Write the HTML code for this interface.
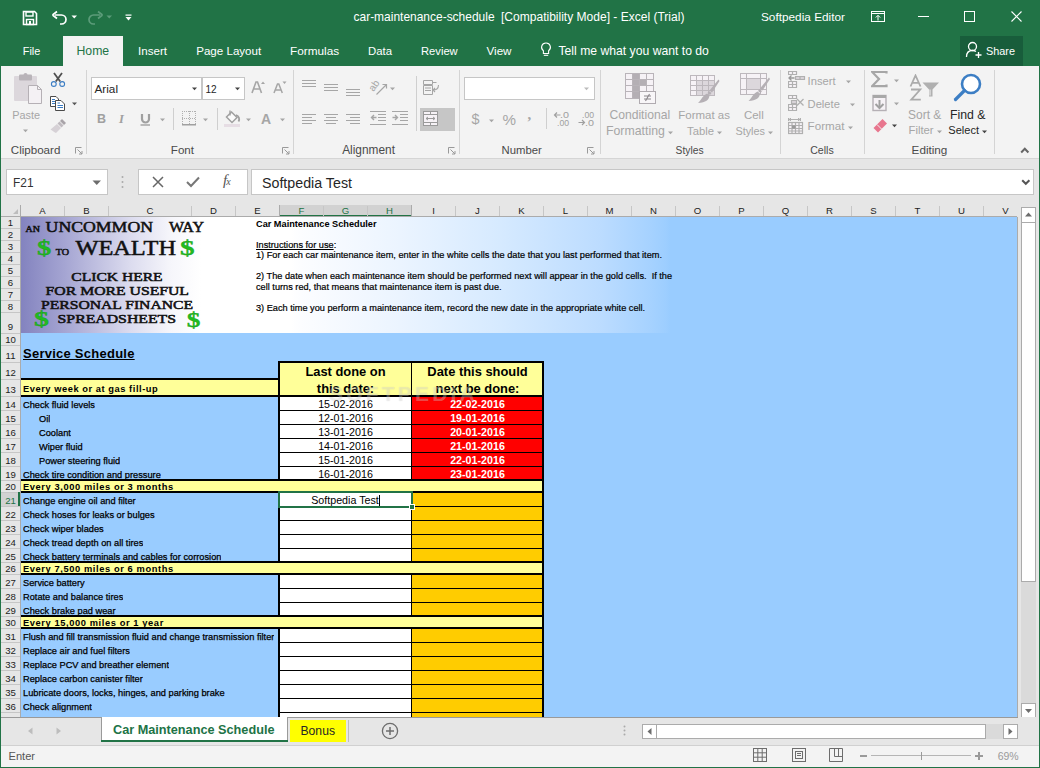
<!DOCTYPE html><html><head><meta charset="utf-8"><style>*{margin:0;padding:0;box-sizing:border-box}
html,body{width:1040px;height:768px;overflow:hidden;background:#217346;font-family:"Liberation Sans",sans-serif}
.a{position:absolute}
.t{position:absolute;white-space:nowrap}
.hdrt{font-size:9.6px;line-height:12px;color:#000}
#vscroll{left:1018px;top:205px;width:21px;height:512px;background:#e6e6e6}
</style></head><body>
<div class="a" style="left:0px;top:0px;width:1040px;height:66px;background:#217346"></div>
<div class="t" style="left:353.5px;top:10px;font-size:11.97px;line-height:15px;color:#fff;">car-maintenance-schedule</div>
<div class="t" style="left:501px;top:10px;font-size:12.04px;line-height:15px;color:#fff;">[Compatibility Mode] - Excel (Trial)</div>
<div class="t" style="left:761px;top:10px;font-size:11.81px;line-height:15px;color:#fff;">Softpedia Editor</div>
<svg class="a" style="left:22px;top:10px;" width="16" height="16" viewBox="0 0 16 16"><path d="M1.5 1.5 H12.5 L14.5 3.5 V14.5 H1.5 Z" fill="none" stroke="#fff" stroke-width="1.6"/><rect x="4" y="2" width="7" height="4" fill="none" stroke="#fff" stroke-width="1.4"/><rect x="4.5" y="9.5" width="7" height="5" fill="none" stroke="#fff" stroke-width="1.4"/><rect x="7" y="11" width="2" height="3" fill="#fff"/></svg>
<svg class="a" style="left:51px;top:10px;" width="18" height="16" viewBox="0 0 18 16"><path d="M4 5 H10.5 A4.5 4.5 0 0 1 10.5 14 H9" fill="none" stroke="#fff" stroke-width="1.7"/><path d="M1.5 5 L6 1.5 M1.5 5 L6 8.5" fill="none" stroke="#fff" stroke-width="1.7"/></svg>
<svg class="a" style="left:71px;top:15px;" width="7" height="5" viewBox="0 0 7 5"><path d="M0.5 0.5 H6 L3.25 3.5 Z" fill="#fff"/></svg>
<svg class="a" style="left:86px;top:10px;" width="18" height="16" viewBox="0 0 18 16"><path d="M14 5 H7.5 A4.5 4.5 0 0 0 7.5 14 H9" fill="none" stroke="#5c9c7a" stroke-width="1.7"/><path d="M16.5 5 L12 1.5 M16.5 5 L12 8.5" fill="none" stroke="#5c9c7a" stroke-width="1.7"/></svg>
<svg class="a" style="left:106px;top:15px;" width="7" height="5" viewBox="0 0 7 5"><path d="M0.5 0.5 H6 L3.25 3.5 Z" fill="#5c9c7a"/></svg>
<svg class="a" style="left:125px;top:14px;" width="8" height="8" viewBox="0 0 8 8"><rect x="0.5" y="0.5" width="6" height="1.2" fill="#fff"/><path d="M0.5 3 H6.5 L3.5 6.5 Z" fill="#fff"/></svg>
<svg class="a" style="left:871px;top:11px;" width="14" height="11" viewBox="0 0 14 11"><rect x="0.5" y="0.5" width="13" height="10" fill="none" stroke="#fff" stroke-width="1"/><path d="M1 2.5 H13" stroke="#fff" stroke-width="1"/><path d="M7 9.5 V4.5 M4.8 6.5 L7 4.3 L9.2 6.5" fill="none" stroke="#fff" stroke-width="1"/></svg>
<div class="a" style="left:918px;top:16px;width:11px;height:1px;background:#fff"></div>
<svg class="a" style="left:964px;top:11px;" width="11" height="11" viewBox="0 0 11 11"><rect x="0.5" y="0.5" width="10" height="10" fill="none" stroke="#fff" stroke-width="1"/></svg>
<svg class="a" style="left:1011px;top:11px;" width="11" height="11" viewBox="0 0 11 11"><path d="M0.5 0.5 L10.5 10.5 M10.5 0.5 L0.5 10.5" stroke="#fff" stroke-width="1.1"/></svg>
<div class="a" style="left:63px;top:36px;width:60px;height:30px;background:#f3f3f3"></div>
<div class="t" style="left:22.8px;top:44px;font-size:10.86px;line-height:14px;color:#fff;">File</div>
<div class="t" style="left:76.5px;top:44px;font-size:12.26px;line-height:15px;color:#217346;">Home</div>
<div class="t" style="left:138px;top:44px;font-size:11.6px;line-height:14px;color:#fff;">Insert</div>
<div class="t" style="left:196.2px;top:44px;font-size:11.58px;line-height:14px;color:#fff;">Page Layout</div>
<div class="t" style="left:290px;top:44px;font-size:11.81px;line-height:15px;color:#fff;">Formulas</div>
<div class="t" style="left:368px;top:44px;font-size:11.36px;line-height:14px;color:#fff;">Data</div>
<div class="t" style="left:421px;top:44px;font-size:11.19px;line-height:14px;color:#fff;">Review</div>
<div class="t" style="left:486.5px;top:43px;font-size:11.63px;line-height:15px;color:#fff;">View</div>
<svg class="a" style="left:540px;top:42px;" width="12" height="16" viewBox="0 0 12 16"><path d="M6 1 A4.3 4.3 0 0 1 8.6 8.8 V11.5 H3.4 V8.8 A4.3 4.3 0 0 1 6 1 Z" fill="none" stroke="#fff" stroke-width="1.1"/><path d="M3.8 13.3 H8.2" stroke="#fff" stroke-width="1.1"/></svg>
<div class="t" style="left:558.5px;top:44px;font-size:12.2px;line-height:15px;color:#fff;">Tell me what you want to do</div>
<div class="a" style="left:960px;top:36px;width:63px;height:30px;background:#185d3b"></div>
<svg class="a" style="left:965px;top:41px;" width="18" height="18" viewBox="0 0 18 18"><circle cx="7.5" cy="5.5" r="4" fill="none" stroke="#fff" stroke-width="1.3"/><path d="M1.5 16 C1.5 11.5 4 9.5 7.5 9.5 C9 9.5 10 9.8 11 10.5" fill="none" stroke="#fff" stroke-width="1.3"/><path d="M13.5 11 V17 M10.5 14 H16.5" stroke="#fff" stroke-width="1.3"/></svg>
<div class="t" style="left:986px;top:44px;font-size:10.87px;line-height:14px;color:#fff;">Share</div>
<div class="a" style="left:1px;top:66px;width:1038px;height:92px;background:#f3f3f3"></div>
<div class="a" style="left:1px;top:158px;width:1038px;height:1px;background:#d5d5d5"></div>
<svg class="a" style="left:13px;top:73px;" width="31" height="32" viewBox="0 0 31 32"><rect x="1" y="3" width="23" height="25" rx="1" fill="#dcd7dc"/><rect x="6" y="1.5" width="13" height="6" rx="1" fill="#b9b4b9"/><circle cx="12.5" cy="2" r="2" fill="#b9b4b9"/><path d="M15.5 12.5 H24.5 L28.5 16.5 V30.5 H15.5 Z" fill="#f4f1f4" stroke="#b5b0b5" stroke-width="1"/><path d="M24.5 12.5 V16.5 H28.5" fill="none" stroke="#b5b0b5" stroke-width="1"/></svg>
<div class="t" style="left:12.2px;top:108px;font-size:10.87px;line-height:14px;color:#a6a6a6;">Paste</div>
<svg class="a" style="left:23px;top:129px;" width="6" height="4" viewBox="0 0 6 4"><path d="M0 0.5 H5 L2.5 3.2 Z" fill="#a6a6a6"/></svg>
<svg class="a" style="left:50px;top:72px;" width="16" height="16" viewBox="0 0 16 16"><path d="M4 1 L10.2 9.5 M12 1 L5.8 9.5" stroke="#505050" stroke-width="1.8"/><circle cx="3.8" cy="12" r="2.4" fill="none" stroke="#3b7dc4" stroke-width="1.1"/><circle cx="12.2" cy="12" r="2.4" fill="none" stroke="#3b7dc4" stroke-width="1.1"/></svg>
<svg class="a" style="left:49px;top:95px;" width="17" height="16" viewBox="0 0 17 16"><path d="M1.5 1.5 H7 L9.5 4 V11.5 H1.5 Z" fill="#fff" stroke="#4a4a4a" stroke-width="1"/><path d="M6.5 5.5 H12 L15.5 9 V15.5 H6.5 Z" fill="#fff" stroke="#4a4a4a" stroke-width="1"/><path d="M3 4.5 H6 M3 6.5 H6 M3 8.5 H6 M8.5 8 H11 M8.5 10.5 H14 M8.5 12.5 H14" stroke="#3b7dc4" stroke-width="1"/></svg>
<svg class="a" style="left:72px;top:102px;" width="6" height="4" viewBox="0 0 6 4"><path d="M0 0.5 H5 L2.5 3.2 Z" fill="#555"/></svg>
<svg class="a" style="left:49px;top:117px;" width="19" height="17" viewBox="0 0 19 17"><path d="M13 2 L17 6 L15 8 L11 4 Z" fill="#a8a3a8"/><path d="M10.5 4.5 L14.5 8.5 L12.5 10.5 L8.5 6.5 Z" fill="#bfbabf"/><path d="M8 7 L12 11 L7 16 C5 15 3 13.5 1.5 12.5 Z" fill="#d6d1d6"/></svg>
<div class="t" style="left:10.8px;top:143px;font-size:11.59px;line-height:14px;color:#4a4a4a;">Clipboard</div>
<svg class="a" style="left:75px;top:147px;" width="8" height="8" viewBox="0 0 8 8"><path d="M0.5 0.5 H6.5 M0.5 0.5 V6.5" stroke="#999" stroke-width="1"/><path d="M2.5 2.5 L7 7 M7 4 V7 H4" fill="none" stroke="#999" stroke-width="1"/></svg>
<div class="a" style="left:86px;top:70px;width:1px;height:84px;background:#d4d4d4"></div>
<div class="a" style="left:91px;top:77px;width:111px;height:23px;background:#fff;border:1px solid #c6c6c6"></div>
<div class="t" style="left:94.5px;top:81px;font-size:11.75px;line-height:15px;color:#262626;">Arial</div>
<svg class="a" style="left:192px;top:87px;" width="6" height="4" viewBox="0 0 6 4"><path d="M0 0.5 H5 L2.5 3.2 Z" fill="#444"/></svg>
<div class="a" style="left:202px;top:77px;width:43px;height:23px;background:#fff;border:1px solid #c6c6c6"></div>
<div class="t" style="left:205.5px;top:83px;font-size:10.07px;line-height:13px;color:#262626;">12</div>
<svg class="a" style="left:235px;top:87px;" width="6" height="4" viewBox="0 0 6 4"><path d="M0 0.5 H5 L2.5 3.2 Z" fill="#444"/></svg>
<svg class="a" style="left:251px;top:80px;" width="14" height="14" viewBox="0 0 14 14"><path d="M1 13 L5 2 H6.5 L10.5 13 M2.7 9 H8.8" fill="none" stroke="#a6a6a6" stroke-width="1.6"/><path d="M10 4 L12 1.5 L14 4 Z" fill="#a6a6a6"/></svg>
<svg class="a" style="left:273px;top:80px;" width="14" height="14" viewBox="0 0 14 14"><path d="M1 13 L4.5 4 H5.8 L9.3 13 M2.5 10 H7.8" fill="none" stroke="#a6a6a6" stroke-width="1.5"/><path d="M9.5 1.5 H13.5 L11.5 4 Z" fill="#a6a6a6"/></svg>
<div class="t" style="left:97px;top:111px;font-size:12.5px;line-height:16px;color:#a0a0a0;font-weight:bold;">B</div>
<div class="t" style="left:119px;top:111px;font-size:12.5px;line-height:16px;color:#a0a0a0;font-weight:bold;font-family:Liberation Serif"><i>I</i></div>
<svg class="a" style="left:140px;top:113px;" width="11" height="13" viewBox="0 0 11 13"><path d="M2 1 V6 A3.5 3.5 0 0 0 9 6 V1" fill="none" stroke="#a0a0a0" stroke-width="2.2"/><path d="M0.5 12 H10" stroke="#a0a0a0" stroke-width="1.4"/></svg>
<svg class="a" style="left:160px;top:118px;" width="6" height="4" viewBox="0 0 6 4"><path d="M0 0.5 H5 L2.5 3.2 Z" fill="#a6a6a6"/></svg>
<div class="a" style="left:173px;top:108px;width:1px;height:22px;background:#cfcfcf"></div>
<svg class="a" style="left:182px;top:111px;" width="14" height="15" viewBox="0 0 14 15"><rect x="0" y="0" width="1" height="1" fill="#b0b0b0"/><rect x="0" y="7" width="1" height="1" fill="#b0b0b0"/><rect x="0" y="0" width="1" height="1" fill="#b0b0b0"/><rect x="7" y="0" width="1" height="1" fill="#b0b0b0"/><rect x="13" y="0" width="1" height="1" fill="#b0b0b0"/><rect x="2" y="0" width="1" height="1" fill="#b0b0b0"/><rect x="2" y="7" width="1" height="1" fill="#b0b0b0"/><rect x="0" y="2" width="1" height="1" fill="#b0b0b0"/><rect x="7" y="2" width="1" height="1" fill="#b0b0b0"/><rect x="13" y="2" width="1" height="1" fill="#b0b0b0"/><rect x="4" y="0" width="1" height="1" fill="#b0b0b0"/><rect x="4" y="7" width="1" height="1" fill="#b0b0b0"/><rect x="0" y="4" width="1" height="1" fill="#b0b0b0"/><rect x="7" y="4" width="1" height="1" fill="#b0b0b0"/><rect x="13" y="4" width="1" height="1" fill="#b0b0b0"/><rect x="6" y="0" width="1" height="1" fill="#b0b0b0"/><rect x="6" y="7" width="1" height="1" fill="#b0b0b0"/><rect x="0" y="6" width="1" height="1" fill="#b0b0b0"/><rect x="7" y="6" width="1" height="1" fill="#b0b0b0"/><rect x="13" y="6" width="1" height="1" fill="#b0b0b0"/><rect x="8" y="0" width="1" height="1" fill="#b0b0b0"/><rect x="8" y="7" width="1" height="1" fill="#b0b0b0"/><rect x="0" y="8" width="1" height="1" fill="#b0b0b0"/><rect x="7" y="8" width="1" height="1" fill="#b0b0b0"/><rect x="13" y="8" width="1" height="1" fill="#b0b0b0"/><rect x="10" y="0" width="1" height="1" fill="#b0b0b0"/><rect x="10" y="7" width="1" height="1" fill="#b0b0b0"/><rect x="0" y="10" width="1" height="1" fill="#b0b0b0"/><rect x="7" y="10" width="1" height="1" fill="#b0b0b0"/><rect x="13" y="10" width="1" height="1" fill="#b0b0b0"/><rect x="12" y="0" width="1" height="1" fill="#b0b0b0"/><rect x="12" y="7" width="1" height="1" fill="#b0b0b0"/><rect x="0" y="12" width="1" height="1" fill="#b0b0b0"/><rect x="7" y="12" width="1" height="1" fill="#b0b0b0"/><rect x="13" y="12" width="1" height="1" fill="#b0b0b0"/><rect x="0" y="13" width="14" height="1.5" fill="#a0a0a0"/></svg>
<svg class="a" style="left:203px;top:118px;" width="6" height="4" viewBox="0 0 6 4"><path d="M0 0.5 H5 L2.5 3.2 Z" fill="#a6a6a6"/></svg>
<div class="a" style="left:217px;top:108px;width:1px;height:22px;background:#cfcfcf"></div>
<svg class="a" style="left:224px;top:110px;" width="18" height="17" viewBox="0 0 18 17"><path d="M7.5 2 L13 7.5 L8 12.5 L2.5 7 Z" fill="#fbfbfb" stroke="#a0a0a0" stroke-width="1.5"/><path d="M6 0.5 V5.5" stroke="#a0a0a0" stroke-width="1.4"/><path d="M12 5 C15 6 16 9 14.5 11.5" fill="none" stroke="#a0a0a0" stroke-width="1.8"/><rect x="0" y="14" width="16" height="3" fill="#e6dde4"/></svg>
<svg class="a" style="left:246px;top:118px;" width="6" height="4" viewBox="0 0 6 4"><path d="M0 0.5 H5 L2.5 3.2 Z" fill="#a6a6a6"/></svg>
<div class="t" style="left:261px;top:111px;font-size:13.99px;line-height:17px;color:#a6a6a6;font-weight:bold;">A</div>
<svg class="a" style="left:280px;top:118px;" width="6" height="4" viewBox="0 0 6 4"><path d="M0 0.5 H5 L2.5 3.2 Z" fill="#a6a6a6"/></svg>
<div class="t" style="left:170.8px;top:143px;font-size:11.6px;line-height:14px;color:#4a4a4a;">Font</div>
<svg class="a" style="left:282px;top:147px;" width="8" height="8" viewBox="0 0 8 8"><path d="M0.5 0.5 H6.5 M0.5 0.5 V6.5" stroke="#999" stroke-width="1"/><path d="M2.5 2.5 L7 7 M7 4 V7 H4" fill="none" stroke="#999" stroke-width="1"/></svg>
<div class="a" style="left:293px;top:70px;width:1px;height:84px;background:#d4d4d4"></div>
<svg class="a" style="left:302px;top:80px;" width="14" height="20" viewBox="0 0 14 20"><rect x="0" y="0" width="14" height="1" fill="#a6a6a6"/><rect x="0" y="3" width="14" height="1" fill="#a6a6a6"/><rect x="0" y="6" width="14" height="1" fill="#a6a6a6"/></svg>
<svg class="a" style="left:324px;top:84px;" width="14" height="20" viewBox="0 0 14 20"><rect x="0" y="0" width="14" height="1" fill="#a6a6a6"/><rect x="0" y="3" width="14" height="1" fill="#a6a6a6"/><rect x="0" y="6" width="14" height="1" fill="#a6a6a6"/></svg>
<svg class="a" style="left:346px;top:88px;" width="14" height="20" viewBox="0 0 14 20"><rect x="0" y="1" width="14" height="1" fill="#a6a6a6"/><rect x="0" y="4" width="14" height="1" fill="#a6a6a6"/><rect x="0" y="7" width="14" height="1" fill="#a6a6a6"/></svg>
<svg class="a" style="left:369px;top:79px;" width="20" height="17" viewBox="0 0 20 17"><text x="0" y="0" font-size="10" fill="#a6a6a6" transform="translate(4.5 13) rotate(-55)" font-family="Liberation Sans">ab</text><path d="M7.5 15.5 L17 6 M13.5 5.5 H17.5 V9.5" fill="none" stroke="#a6a6a6" stroke-width="1.2"/></svg>
<svg class="a" style="left:390px;top:87px;" width="6" height="4" viewBox="0 0 6 4"><path d="M0 0.5 H5 L2.5 3.2 Z" fill="#a6a6a6"/></svg>
<div class="a" style="left:416px;top:76px;width:1px;height:55px;background:#cfcfcf"></div>
<svg class="a" style="left:423px;top:80px;" width="17" height="16" viewBox="0 0 17 16"><path d="M0.5 0.5 H9.5 V4.5 H0.5 Z M9.5 2.5 H13.5" fill="none" stroke="#a6a6a6"/><path d="M0.5 5.5 H9.5 V14.5 H0.5 Z M2 8 H8 M2 10.5 H8" fill="none" stroke="#a6a6a6"/><path d="M15.5 5 C15.5 9 13 10 10 10 M12 8 L10 10 L12 12" fill="none" stroke="#a6a6a6" stroke-width="1.1"/></svg>
<svg class="a" style="left:302px;top:114px;" width="14" height="20" viewBox="0 0 14 20"><rect x="0" y="0" width="14" height="1" fill="#a6a6a6"/><rect x="0" y="3" width="10" height="1" fill="#a6a6a6"/><rect x="0" y="6" width="14" height="1" fill="#a6a6a6"/><rect x="0" y="9" width="10" height="1" fill="#a6a6a6"/></svg>
<svg class="a" style="left:324px;top:114px;" width="14" height="20" viewBox="0 0 14 20"><rect x="0" y="0" width="14" height="1" fill="#a6a6a6"/><rect x="2" y="3" width="10" height="1" fill="#a6a6a6"/><rect x="0" y="6" width="14" height="1" fill="#a6a6a6"/><rect x="2" y="9" width="10" height="1" fill="#a6a6a6"/></svg>
<svg class="a" style="left:346px;top:114px;" width="14" height="20" viewBox="0 0 14 20"><rect x="0" y="0" width="14" height="1" fill="#a6a6a6"/><rect x="4" y="3" width="10" height="1" fill="#a6a6a6"/><rect x="0" y="6" width="14" height="1" fill="#a6a6a6"/><rect x="4" y="9" width="10" height="1" fill="#a6a6a6"/></svg>
<svg class="a" style="left:370px;top:111px;" width="17" height="15" viewBox="0 0 17 15"><path d="M0 0.5 H16 M8 3.5 H16 M8 6.5 H16 M8 9.5 H16 M0 13.5 H16" stroke="#a6a6a6"/><path d="M6.5 6.5 H1.5 M4 4 L1.5 6.5 L4 9" fill="none" stroke="#a6a6a6" stroke-width="1.4"/></svg>
<svg class="a" style="left:392px;top:111px;" width="17" height="15" viewBox="0 0 17 15"><path d="M0 0.5 H16 M8 3.5 H16 M8 6.5 H16 M8 9.5 H16 M0 13.5 H16" stroke="#a6a6a6"/><path d="M0.5 6.5 H5.5 M3 4 L5.5 6.5 L3 9" fill="none" stroke="#a6a6a6" stroke-width="1.4"/></svg>
<div class="a" style="left:420px;top:108px;width:35px;height:23px;background:#c6c6c6"></div>
<svg class="a" style="left:423px;top:111px;" width="16" height="16" viewBox="0 0 16 16"><g fill="#f6f2f6" stroke="#9a9a9a"><rect x="0.5" y="0.5" width="14" height="14"/></g><path d="M0.5 3.5 H14.5 M0.5 11.5 H14.5 M7.5 0.5 V3.5 M7.5 11.5 V14.5 M3 7.5 H12 M3 7.5 L5 6 M3 7.5 L5 9 M12 7.5 L10 6 M12 7.5 L10 9" fill="none" stroke="#9a9a9a"/></svg>
<div class="t" style="left:342.2px;top:143px;font-size:11.87px;line-height:15px;color:#4a4a4a;">Alignment</div>
<svg class="a" style="left:448px;top:147px;" width="8" height="8" viewBox="0 0 8 8"><path d="M0.5 0.5 H6.5 M0.5 0.5 V6.5" stroke="#999" stroke-width="1"/><path d="M2.5 2.5 L7 7 M7 4 V7 H4" fill="none" stroke="#999" stroke-width="1"/></svg>
<div class="a" style="left:459px;top:70px;width:1px;height:84px;background:#d4d4d4"></div>
<div class="a" style="left:464px;top:77px;width:131px;height:23px;background:#fff;border:1px solid #c6c6c6"></div>
<svg class="a" style="left:584px;top:87px;" width="6" height="4" viewBox="0 0 6 4"><path d="M0 0.5 H5 L2.5 3.2 Z" fill="#bbb"/></svg>
<div class="t" style="left:471.5px;top:110px;font-size:14.39px;line-height:18px;color:#a6a6a6;">$</div>
<svg class="a" style="left:489px;top:119px;" width="6" height="4" viewBox="0 0 6 4"><path d="M0 0.5 H5 L2.5 3.2 Z" fill="#a6a6a6"/></svg>
<div class="t" style="left:502.5px;top:110px;font-size:15.18px;line-height:19px;color:#a6a6a6;">%</div>
<div class="t" style="left:527.5px;top:105px;font-size:15px;line-height:19px;color:#a6a6a6;font-weight:bold;font-family:Liberation Serif">,</div>
<div class="a" style="left:546px;top:108px;width:1px;height:21px;background:#cfcfcf"></div>
<svg class="a" style="left:553px;top:111px;" width="17" height="16" viewBox="0 0 17 16"><text x="7" y="7" font-size="9" fill="#a0a0a0" font-family="Liberation Sans" textLength="9" lengthAdjust="spacingAndGlyphs">.0</text><text x="4" y="15" font-size="9" fill="#a0a0a0" font-family="Liberation Sans" textLength="12" lengthAdjust="spacingAndGlyphs">.00</text><path d="M7.5 4 H1.5 M4 1.5 L1.5 4 L4 6.5" fill="none" stroke="#a0a0a0" stroke-width="1.2"/></svg>
<svg class="a" style="left:578px;top:111px;" width="17" height="16" viewBox="0 0 17 16"><text x="4" y="7" font-size="9" fill="#a0a0a0" font-family="Liberation Sans" textLength="12" lengthAdjust="spacingAndGlyphs">.00</text><text x="7" y="15" font-size="9" fill="#a0a0a0" font-family="Liberation Sans" textLength="9" lengthAdjust="spacingAndGlyphs">.0</text><path d="M0.5 11.5 H6.5 M4 9 L6.5 11.5 L4 14" fill="none" stroke="#a0a0a0" stroke-width="1.2"/></svg>
<div class="t" style="left:501.6px;top:143px;font-size:11.33px;line-height:14px;color:#4a4a4a;">Number</div>
<svg class="a" style="left:587px;top:147px;" width="8" height="8" viewBox="0 0 8 8"><path d="M0.5 0.5 H6.5 M0.5 0.5 V6.5" stroke="#999" stroke-width="1"/><path d="M2.5 2.5 L7 7 M7 4 V7 H4" fill="none" stroke="#999" stroke-width="1"/></svg>
<div class="a" style="left:600px;top:70px;width:1px;height:84px;background:#d4d4d4"></div>
<svg class="a" style="left:625px;top:73px;" width="32" height="32" viewBox="0 0 32 32"><rect x="0.5" y="0.5" width="7" height="6" fill="#f6f2f6" stroke="#b9b4b9"/><rect x="7.5" y="0.5" width="7" height="6" fill="#b4afb4" stroke="#b9b4b9"/><rect x="14.5" y="0.5" width="7" height="6" fill="#f6f2f6" stroke="#b9b4b9"/><rect x="21.5" y="0.5" width="7" height="6" fill="#f6f2f6" stroke="#b9b4b9"/><rect x="0.5" y="6.5" width="7" height="6" fill="#f6f2f6" stroke="#b9b4b9"/><rect x="7.5" y="6.5" width="7" height="6" fill="#b4afb4" stroke="#b9b4b9"/><rect x="14.5" y="6.5" width="7" height="6" fill="#b4afb4" stroke="#b9b4b9"/><rect x="21.5" y="6.5" width="7" height="6" fill="#f6f2f6" stroke="#b9b4b9"/><rect x="0.5" y="12.5" width="7" height="6" fill="#f6f2f6" stroke="#b9b4b9"/><rect x="7.5" y="12.5" width="7" height="6" fill="#b4afb4" stroke="#b9b4b9"/><rect x="14.5" y="12.5" width="7" height="6" fill="#f6f2f6" stroke="#b9b4b9"/><rect x="21.5" y="12.5" width="7" height="6" fill="#f6f2f6" stroke="#b9b4b9"/><rect x="0.5" y="18.5" width="7" height="7" fill="#f6f2f6" stroke="#b9b4b9"/><rect x="7.5" y="18.5" width="7" height="7" fill="#b4afb4" stroke="#b9b4b9"/><rect x="14.5" y="18.5" width="7" height="7" fill="#f6f2f6" stroke="#b9b4b9"/><rect x="21.5" y="18.5" width="7" height="7" fill="#f6f2f6" stroke="#b9b4b9"/><rect x="14.5" y="18.5" width="16" height="12" fill="#f8f6f8" stroke="#b0abb0"/><path d="M19 23 H26 M19 26 H26 M24.5 21 L20.5 28" stroke="#8a858a" stroke-width="1.1"/></svg>
<div class="t" style="left:609.4px;top:108px;font-size:12.15px;line-height:15px;color:#a6a6a6;">Conditional</div>
<div class="t" style="left:606px;top:124px;font-size:12.32px;line-height:15px;color:#a6a6a6;">Formatting</div>
<svg class="a" style="left:668px;top:131px;" width="6" height="4" viewBox="0 0 6 4"><path d="M0 0.5 H5 L2.5 3.2 Z" fill="#a6a6a6"/></svg>
<svg class="a" style="left:690px;top:75px;" width="32" height="30" viewBox="0 0 32 30"><rect x="0.5" y="0.5" width="6" height="5" fill="#f6f2f6" stroke="#bdb8bd"/><rect x="6.5" y="0.5" width="6" height="5" fill="#f6f2f6" stroke="#bdb8bd"/><rect x="12.5" y="0.5" width="6" height="5" fill="#f6f2f6" stroke="#bdb8bd"/><rect x="18.5" y="0.5" width="6" height="5" fill="#f6f2f6" stroke="#bdb8bd"/><rect x="0.5" y="5.5" width="6" height="5" fill="#f6f2f6" stroke="#bdb8bd"/><rect x="6.5" y="5.5" width="6" height="5" fill="#dcd7dc" stroke="#bdb8bd"/><rect x="12.5" y="5.5" width="6" height="5" fill="#dcd7dc" stroke="#bdb8bd"/><rect x="18.5" y="5.5" width="6" height="5" fill="#dcd7dc" stroke="#bdb8bd"/><rect x="0.5" y="10.5" width="6" height="5" fill="#f6f2f6" stroke="#bdb8bd"/><rect x="6.5" y="10.5" width="6" height="5" fill="#dcd7dc" stroke="#bdb8bd"/><rect x="12.5" y="10.5" width="6" height="5" fill="#dcd7dc" stroke="#bdb8bd"/><rect x="18.5" y="10.5" width="6" height="5" fill="#dcd7dc" stroke="#bdb8bd"/><rect x="0.5" y="15.5" width="6" height="5" fill="#f6f2f6" stroke="#bdb8bd"/><rect x="6.5" y="15.5" width="6" height="5" fill="#dcd7dc" stroke="#bdb8bd"/><rect x="12.5" y="15.5" width="6" height="5" fill="#dcd7dc" stroke="#bdb8bd"/><rect x="18.5" y="15.5" width="6" height="5" fill="#dcd7dc" stroke="#bdb8bd"/><path d="M29.5 6 L22 17.5 L19.5 15.5 L28.5 4.5 Z" fill="#b5b0b5"/><path d="M21.5 18 L19 16 L17.5 18 L20 20 Z" fill="#b5b0b5"/><path d="M17 18.5 L19.5 20.5 C19 25 16 27.5 8 28 C11 25.5 12.5 20.5 17 18.5 Z" fill="#b5b0b5"/></svg>
<div class="t" style="left:678.3px;top:108px;font-size:11.49px;line-height:14px;color:#a6a6a6;">Format as</div>
<div class="t" style="left:687px;top:124px;font-size:11.25px;line-height:14px;color:#a6a6a6;">Table</div>
<svg class="a" style="left:717px;top:131px;" width="6" height="4" viewBox="0 0 6 4"><path d="M0 0.5 H5 L2.5 3.2 Z" fill="#a6a6a6"/></svg>
<svg class="a" style="left:740px;top:73px;" width="32" height="30" viewBox="0 0 32 30"><rect x="0.5" y="0.5" width="26" height="21" fill="#f6f2f6" stroke="#bdb8bd"/><rect x="6.5" y="5.5" width="14" height="11" fill="#dcd7dc" stroke="#bdb8bd"/><path d="M0.5 5.5 H26.5 M0.5 16.5 H26.5 M6.5 0.5 V21.5 M20.5 0.5 V21.5" stroke="#bdb8bd"/><path d="M30 6 L22.5 17.5 L20 15.5 L29 4.5 Z" fill="#b5b0b5"/><path d="M22 18 L19.5 16 L18 18 L20.5 20 Z" fill="#b5b0b5"/><path d="M17.5 18.5 L20 20.5 C19.5 25 16.5 27.5 8.5 28 C11.5 25.5 13 20.5 17.5 18.5 Z" fill="#b5b0b5"/></svg>
<div class="t" style="left:744px;top:108px;font-size:11.44px;line-height:14px;color:#a6a6a6;">Cell</div>
<div class="t" style="left:735.4px;top:124px;font-size:10.87px;line-height:14px;color:#a6a6a6;">Styles</div>
<svg class="a" style="left:768px;top:131px;" width="6" height="4" viewBox="0 0 6 4"><path d="M0 0.5 H5 L2.5 3.2 Z" fill="#a6a6a6"/></svg>
<div class="t" style="left:675.6px;top:144px;font-size:10.28px;line-height:13px;color:#4a4a4a;">Styles</div>
<div class="a" style="left:780px;top:70px;width:1px;height:84px;background:#d4d4d4"></div>
<svg class="a" style="left:788px;top:71px;" width="18" height="18" viewBox="0 0 18 18"><g fill="#f6f2f6" stroke="#b0b0b0" stroke-width="1.2"><path d="M0.5 0.5 H8.5 V3.5 H0.5 Z M4.5 0.5 V3.5"/><path d="M7.5 5.5 H16.5 V8.5 H7.5 Z M12 5.5 V8.5" fill="#d8d3d8"/><path d="M0.5 10.5 H8.5 V16.5 H0.5 Z M0.5 13.5 H8.5 M4.5 10.5 V16.5"/></g><path d="M6.5 7 H1 M3.5 4.5 L1 7 L3.5 9.5" fill="none" stroke="#9a9a9a" stroke-width="1.3"/></svg>
<div class="t" style="left:807.6px;top:74px;font-size:11.2px;line-height:14px;color:#a6a6a6;">Insert</div>
<svg class="a" style="left:846px;top:80px;" width="6" height="4" viewBox="0 0 6 4"><path d="M0 0.5 H5 L2.5 3.2 Z" fill="#a6a6a6"/></svg>
<svg class="a" style="left:788px;top:95px;" width="18" height="18" viewBox="0 0 18 18"><g fill="#f6f2f6" stroke="#b0b0b0" stroke-width="1.2"><path d="M0.5 0.5 H8.5 V3.5 H0.5 Z M4.5 0.5 V3.5"/><path d="M3.5 5.5 H8.5 V8.5 H3.5 Z" fill="#d8d3d8"/><path d="M0.5 9.5 H8.5 V15.5 H0.5 Z M0.5 12.5 H8.5 M4.5 9.5 V15.5"/></g><path d="M9 4 L15.5 10.5 M15.5 4 L9 10.5" stroke="#b0b0b0" stroke-width="1.3"/></svg>
<div class="t" style="left:807.6px;top:97px;font-size:11.17px;line-height:14px;color:#a6a6a6;">Delete</div>
<svg class="a" style="left:850px;top:103px;" width="6" height="4" viewBox="0 0 6 4"><path d="M0 0.5 H5 L2.5 3.2 Z" fill="#a6a6a6"/></svg>
<svg class="a" style="left:788px;top:118px;" width="18" height="18" viewBox="0 0 18 18"><path d="M0.5 0 V3 M12.5 0 V3 M1 1.5 H12 M1 1.5 L3 0.2 M1 1.5 L3 2.8 M12 1.5 L10 0.2 M12 1.5 L10 2.8" fill="none" stroke="#b0b0b0" stroke-width="1"/><g fill="#f6f2f6" stroke="#b0b0b0" stroke-width="1.2"><rect x="0.5" y="4.5" width="14" height="11"/><path d="M0.5 7.5 H14.5 M0.5 10.5 H14.5 M0.5 13 H14.5 M4 4.5 V15.5 M7.5 4.5 V15.5 M11 4.5 V15.5"/></g><rect x="4" y="7.5" width="3.5" height="3" fill="#9a9a9a"/></svg>
<div class="t" style="left:807.6px;top:118px;font-size:11.62px;line-height:15px;color:#a6a6a6;">Format</div>
<svg class="a" style="left:848px;top:126px;" width="6" height="4" viewBox="0 0 6 4"><path d="M0 0.5 H5 L2.5 3.2 Z" fill="#a6a6a6"/></svg>
<div class="t" style="left:810.2px;top:144px;font-size:10.57px;line-height:13px;color:#4a4a4a;">Cells</div>
<div class="a" style="left:864px;top:70px;width:1px;height:84px;background:#d4d4d4"></div>
<svg class="a" style="left:871px;top:71px;" width="17" height="17" viewBox="0 0 17 17"><path d="M15.5 2.5 V0.8 H1 L8 8 L1 15.2 H15.5 V13.5" fill="none" stroke="#a6a6a6" stroke-width="2.2"/></svg>
<svg class="a" style="left:894px;top:79px;" width="6" height="4" viewBox="0 0 6 4"><path d="M0 0.5 H5 L2.5 3.2 Z" fill="#a6a6a6"/></svg>
<svg class="a" style="left:872px;top:94px;" width="16" height="18" viewBox="0 0 16 18"><rect x="1" y="1.5" width="13" height="15" fill="#f6f2f6" stroke="#b5b0b5" stroke-width="1.4"/><rect x="1" y="1" width="13" height="3" fill="#a8a8a8"/><path d="M7.5 6 V13" stroke="#a0a0a0" stroke-width="2"/><path d="M3.5 10 L7.5 14 L11.5 10" fill="none" stroke="#a0a0a0" stroke-width="2"/></svg>
<svg class="a" style="left:894px;top:102px;" width="6" height="4" viewBox="0 0 6 4"><path d="M0 0.5 H5 L2.5 3.2 Z" fill="#a6a6a6"/></svg>
<svg class="a" style="left:872px;top:118px;" width="16" height="15" viewBox="0 0 16 15"><path d="M10.5 1 L15 5.5 L6 14.5 L1.5 10 Z" fill="#e8768e"/><path d="M5 6.5 L9.5 11" stroke="#f3f3f3" stroke-width="1"/></svg>
<svg class="a" style="left:892px;top:124px;" width="6" height="4" viewBox="0 0 6 4"><path d="M0 0.5 H5 L2.5 3.2 Z" fill="#444"/></svg>
<svg class="a" style="left:909px;top:74px;" width="32" height="29" viewBox="0 0 32 29"><path d="M1.5 12.5 L6.5 1.5 L11.5 12.5 M3.3 8.8 H9.7" fill="none" stroke="#ababab" stroke-width="1.8"/><path d="M2 15.5 H11.3 L2.3 25.6 H11.8" fill="none" stroke="#ababab" stroke-width="1.8"/><path d="M13.5 8.5 H30 L23.5 15.5 V22.5 H20 V15.5 Z" fill="#b0b0b0"/><path d="M21 15.5 V21.5" stroke="#f3f3f3" stroke-width="1"/></svg>
<div class="t" style="left:908px;top:108px;font-size:11.98px;line-height:15px;color:#a6a6a6;">Sort &amp;</div>
<div class="t" style="left:908.5px;top:123px;font-size:11.3px;line-height:14px;color:#a6a6a6;">Filter</div>
<svg class="a" style="left:937px;top:130px;" width="6" height="4" viewBox="0 0 6 4"><path d="M0 0.5 H5 L2.5 3.2 Z" fill="#a6a6a6"/></svg>
<svg class="a" style="left:952px;top:72px;" width="31" height="31" viewBox="0 0 31 31"><circle cx="19" cy="12" r="9" fill="#fff" stroke="#3c7ec4" stroke-width="2.6"/><path d="M12.5 18.5 L3.5 27.5" stroke="#3c7ec4" stroke-width="3.2" stroke-linecap="round"/></svg>
<div class="t" style="left:950px;top:108px;font-size:12.28px;line-height:15px;color:#262626;">Find &amp;</div>
<div class="t" style="left:948.3px;top:123px;font-size:11.05px;line-height:14px;color:#262626;">Select</div>
<svg class="a" style="left:982px;top:130px;" width="6" height="4" viewBox="0 0 6 4"><path d="M0 0.5 H5 L2.5 3.2 Z" fill="#444"/></svg>
<div class="t" style="left:911.6px;top:142px;font-size:11.71px;line-height:15px;color:#4a4a4a;">Editing</div>
<div class="a" style="left:994px;top:70px;width:1px;height:84px;background:#d4d4d4"></div>
<svg class="a" style="left:1020px;top:147px;" width="10" height="7" viewBox="0 0 10 7"><path d="M1.2 5.5 L4.8 1.8 L8.4 5.5" fill="none" stroke="#666" stroke-width="2"/></svg>
<div class="a" style="left:1px;top:159px;width:1038px;height:46px;background:#e6e6e6"></div>
<div class="a" style="left:6px;top:169px;width:102px;height:26px;background:#fff;border:1px solid #c6c6c6"></div>
<div class="t" style="left:13px;top:176px;font-size:11.9px;line-height:15px;color:#333;">F21</div>
<svg class="a" style="left:92px;top:180px;" width="10" height="6" viewBox="0 0 10 6"><path d="M0.5 0.5 H9 L4.75 5 Z" fill="#6d6d6d"/></svg>
<svg class="a" style="left:121px;top:175px;" width="3" height="15" viewBox="0 0 3 15"><circle cx="1.5" cy="2" r="1" fill="#aaa"/><circle cx="1.5" cy="7" r="1" fill="#aaa"/><circle cx="1.5" cy="12" r="1" fill="#aaa"/></svg>
<div class="a" style="left:138px;top:169px;width:110px;height:26px;background:#fff;border:1px solid #c6c6c6"></div>
<svg class="a" style="left:152px;top:176px;" width="12" height="12" viewBox="0 0 12 12"><path d="M1 1 L11 11 M11 1 L1 11" stroke="#666" stroke-width="1.5"/></svg>
<svg class="a" style="left:186px;top:176px;" width="14" height="12" viewBox="0 0 14 12"><path d="M1 6 L5 10 L13 1.5" fill="none" stroke="#777" stroke-width="2"/></svg>
<div class="t" style="left:223px;top:171px;font-size:15px;line-height:19px;color:#555;font-family:Liberation Serif"><i>f</i><span style="font-size:10px;margin-left:-1px"><i>x</i></span></div>
<div class="a" style="left:251px;top:169px;width:783px;height:26px;background:#fff;border:1px solid #c6c6c6"></div>
<div class="t" style="left:262px;top:174px;font-size:14.24px;line-height:18px;color:#262626;">Softpedia Test</div>
<svg class="a" style="left:1021px;top:179px;" width="10" height="7" viewBox="0 0 10 7"><path d="M1.2 1.2 L4.8 4.8 L8.4 1.2" fill="none" stroke="#555" stroke-width="2"/></svg>
<div class="a" style="left:0;top:205px;width:1018px;height:12px;background:#e6e6e6;overflow:hidden">
<svg class="a" style="left:12px;top:3px" width="7" height="7"><path d="M6 1 L6 6 L1 6 Z" fill="#bdbdbd"/></svg>
<div class="a" style="left:280px;top:0px;width:131px;height:12px;background:#d2d2d2"></div>
<div class="a" style="left:280px;top:10px;width:132px;height:2px;background:#217346"></div>
<div class="a" style="left:0px;top:11px;width:1018px;height:1px;background:#ababab"></div>
<div class="a" style="left:64px;top:1px;width:1px;height:10px;background:#c6c6c6"></div>
<div class="t hdrt" style="left:22.5px;top:0px;width:40px;text-align:center;color:#222">A</div>
<div class="a" style="left:108px;top:1px;width:1px;height:10px;background:#c6c6c6"></div>
<div class="t hdrt" style="left:66.5px;top:0px;width:40px;text-align:center;color:#222">B</div>
<div class="a" style="left:191px;top:1px;width:1px;height:10px;background:#c6c6c6"></div>
<div class="t hdrt" style="left:130.0px;top:0px;width:40px;text-align:center;color:#222">C</div>
<div class="a" style="left:235px;top:1px;width:1px;height:10px;background:#c6c6c6"></div>
<div class="t hdrt" style="left:193.5px;top:0px;width:40px;text-align:center;color:#222">D</div>
<div class="a" style="left:279px;top:0px;width:1px;height:11px;background:#ababab"></div>
<div class="t hdrt" style="left:237.5px;top:0px;width:40px;text-align:center;color:#222">E</div>
<div class="a" style="left:323px;top:1px;width:1px;height:10px;background:#c6c6c6"></div>
<div class="t hdrt" style="left:281.5px;top:0px;width:40px;text-align:center;color:#217346">F</div>
<div class="a" style="left:367px;top:1px;width:1px;height:10px;background:#c6c6c6"></div>
<div class="t hdrt" style="left:325.5px;top:0px;width:40px;text-align:center;color:#217346">G</div>
<div class="a" style="left:411px;top:0px;width:1px;height:11px;background:#ababab"></div>
<div class="t hdrt" style="left:369.5px;top:0px;width:40px;text-align:center;color:#217346">H</div>
<div class="a" style="left:455px;top:1px;width:1px;height:10px;background:#c6c6c6"></div>
<div class="t hdrt" style="left:413.5px;top:0px;width:40px;text-align:center;color:#222">I</div>
<div class="a" style="left:499px;top:1px;width:1px;height:10px;background:#c6c6c6"></div>
<div class="t hdrt" style="left:457.5px;top:0px;width:40px;text-align:center;color:#222">J</div>
<div class="a" style="left:543px;top:1px;width:1px;height:10px;background:#c6c6c6"></div>
<div class="t hdrt" style="left:501.5px;top:0px;width:40px;text-align:center;color:#222">K</div>
<div class="a" style="left:587px;top:1px;width:1px;height:10px;background:#c6c6c6"></div>
<div class="t hdrt" style="left:545.5px;top:0px;width:40px;text-align:center;color:#222">L</div>
<div class="a" style="left:631px;top:1px;width:1px;height:10px;background:#c6c6c6"></div>
<div class="t hdrt" style="left:589.5px;top:0px;width:40px;text-align:center;color:#222">M</div>
<div class="a" style="left:675px;top:1px;width:1px;height:10px;background:#c6c6c6"></div>
<div class="t hdrt" style="left:633.5px;top:0px;width:40px;text-align:center;color:#222">N</div>
<div class="a" style="left:719px;top:1px;width:1px;height:10px;background:#c6c6c6"></div>
<div class="t hdrt" style="left:677.5px;top:0px;width:40px;text-align:center;color:#222">O</div>
<div class="a" style="left:763px;top:1px;width:1px;height:10px;background:#c6c6c6"></div>
<div class="t hdrt" style="left:721.5px;top:0px;width:40px;text-align:center;color:#222">P</div>
<div class="a" style="left:807px;top:1px;width:1px;height:10px;background:#c6c6c6"></div>
<div class="t hdrt" style="left:765.5px;top:0px;width:40px;text-align:center;color:#222">Q</div>
<div class="a" style="left:851px;top:1px;width:1px;height:10px;background:#c6c6c6"></div>
<div class="t hdrt" style="left:809.5px;top:0px;width:40px;text-align:center;color:#222">R</div>
<div class="a" style="left:895px;top:1px;width:1px;height:10px;background:#c6c6c6"></div>
<div class="t hdrt" style="left:853.5px;top:0px;width:40px;text-align:center;color:#222">S</div>
<div class="a" style="left:939px;top:1px;width:1px;height:10px;background:#c6c6c6"></div>
<div class="t hdrt" style="left:897.5px;top:0px;width:40px;text-align:center;color:#222">T</div>
<div class="a" style="left:983px;top:1px;width:1px;height:10px;background:#c6c6c6"></div>
<div class="t hdrt" style="left:941.5px;top:0px;width:40px;text-align:center;color:#222">U</div>
<div class="t hdrt" style="left:985.5px;top:0px;width:40px;text-align:center;color:#222">V</div>
<div class="a" style="left:20px;top:0px;width:1px;height:12px;background:#ababab"></div>
<div class="a" style="left:1017px;top:0px;width:1px;height:12px;background:#e6e6e6"></div>
</div>
<div class="a" style="left:1px;top:217px;width:20px;height:500px;background:#e6e6e6;overflow:hidden">
<div class="a" style="left:0px;top:11px;width:19px;height:1px;background:#c6c6c6"></div>
<div class="t hdrt" style="left:0px;top:-0.35px;width:19px;text-align:center;color:#222">1</div>
<div class="a" style="left:0px;top:23px;width:19px;height:1px;background:#c6c6c6"></div>
<div class="t hdrt" style="left:0px;top:11.65px;width:19px;text-align:center;color:#222">2</div>
<div class="a" style="left:0px;top:35px;width:19px;height:1px;background:#c6c6c6"></div>
<div class="t hdrt" style="left:0px;top:23.65px;width:19px;text-align:center;color:#222">3</div>
<div class="a" style="left:0px;top:47px;width:19px;height:1px;background:#c6c6c6"></div>
<div class="t hdrt" style="left:0px;top:35.65px;width:19px;text-align:center;color:#222">4</div>
<div class="a" style="left:0px;top:59px;width:19px;height:1px;background:#c6c6c6"></div>
<div class="t hdrt" style="left:0px;top:47.65px;width:19px;text-align:center;color:#222">5</div>
<div class="a" style="left:0px;top:71px;width:19px;height:1px;background:#c6c6c6"></div>
<div class="t hdrt" style="left:0px;top:59.65px;width:19px;text-align:center;color:#222">6</div>
<div class="a" style="left:0px;top:83px;width:19px;height:1px;background:#c6c6c6"></div>
<div class="t hdrt" style="left:0px;top:71.65px;width:19px;text-align:center;color:#222">7</div>
<div class="a" style="left:0px;top:95px;width:19px;height:1px;background:#c6c6c6"></div>
<div class="t hdrt" style="left:0px;top:83.65px;width:19px;text-align:center;color:#222">8</div>
<div class="a" style="left:0px;top:116px;width:19px;height:1px;background:#c6c6c6"></div>
<div class="t hdrt" style="left:0px;top:103.85px;width:19px;text-align:center;color:#222">9</div>
<div class="a" style="left:0px;top:128px;width:19px;height:1px;background:#c6c6c6"></div>
<div class="t hdrt" style="left:0px;top:116.65px;width:19px;text-align:center;color:#222">10</div>
<div class="a" style="left:0px;top:145px;width:19px;height:1px;background:#c6c6c6"></div>
<div class="t hdrt" style="left:0px;top:132.55px;width:19px;text-align:center;color:#222">11</div>
<div class="a" style="left:0px;top:162px;width:19px;height:1px;background:#c6c6c6"></div>
<div class="t hdrt" style="left:0px;top:149.55px;width:19px;text-align:center;color:#222">12</div>
<div class="a" style="left:0px;top:179px;width:19px;height:1px;background:#c6c6c6"></div>
<div class="t hdrt" style="left:0px;top:166.55px;width:19px;text-align:center;color:#222">13</div>
<div class="a" style="left:0px;top:193px;width:19px;height:1px;background:#c6c6c6"></div>
<div class="t hdrt" style="left:0px;top:181.65px;width:19px;text-align:center;color:#222">14</div>
<div class="a" style="left:0px;top:207px;width:19px;height:1px;background:#c6c6c6"></div>
<div class="t hdrt" style="left:0px;top:195.65px;width:19px;text-align:center;color:#222">15</div>
<div class="a" style="left:0px;top:221px;width:19px;height:1px;background:#c6c6c6"></div>
<div class="t hdrt" style="left:0px;top:209.65px;width:19px;text-align:center;color:#222">16</div>
<div class="a" style="left:0px;top:235px;width:19px;height:1px;background:#c6c6c6"></div>
<div class="t hdrt" style="left:0px;top:223.65px;width:19px;text-align:center;color:#222">17</div>
<div class="a" style="left:0px;top:249px;width:19px;height:1px;background:#c6c6c6"></div>
<div class="t hdrt" style="left:0px;top:237.65px;width:19px;text-align:center;color:#222">18</div>
<div class="a" style="left:0px;top:263px;width:19px;height:1px;background:#c6c6c6"></div>
<div class="t hdrt" style="left:0px;top:251.65px;width:19px;text-align:center;color:#222">19</div>
<div class="a" style="left:0px;top:275px;width:19px;height:1px;background:#c6c6c6"></div>
<div class="t hdrt" style="left:0px;top:263.65px;width:19px;text-align:center;color:#222">20</div>
<div class="a" style="left:0px;top:276px;width:19px;height:13px;background:#d2d2d2"></div>
<div class="a" style="left:17px;top:275px;width:2px;height:15px;background:#217346"></div>
<div class="a" style="left:0px;top:289px;width:19px;height:1px;background:#c6c6c6"></div>
<div class="t hdrt" style="left:0px;top:277.65px;width:19px;text-align:center;color:#217346">21</div>
<div class="a" style="left:0px;top:303px;width:19px;height:1px;background:#c6c6c6"></div>
<div class="t hdrt" style="left:0px;top:291.65px;width:19px;text-align:center;color:#222">22</div>
<div class="a" style="left:0px;top:317px;width:19px;height:1px;background:#c6c6c6"></div>
<div class="t hdrt" style="left:0px;top:305.65px;width:19px;text-align:center;color:#222">23</div>
<div class="a" style="left:0px;top:331px;width:19px;height:1px;background:#c6c6c6"></div>
<div class="t hdrt" style="left:0px;top:319.65px;width:19px;text-align:center;color:#222">24</div>
<div class="a" style="left:0px;top:345px;width:19px;height:1px;background:#c6c6c6"></div>
<div class="t hdrt" style="left:0px;top:333.65px;width:19px;text-align:center;color:#222">25</div>
<div class="a" style="left:0px;top:357px;width:19px;height:1px;background:#c6c6c6"></div>
<div class="t hdrt" style="left:0px;top:345.65px;width:19px;text-align:center;color:#222">26</div>
<div class="a" style="left:0px;top:371px;width:19px;height:1px;background:#c6c6c6"></div>
<div class="t hdrt" style="left:0px;top:359.65px;width:19px;text-align:center;color:#222">27</div>
<div class="a" style="left:0px;top:385px;width:19px;height:1px;background:#c6c6c6"></div>
<div class="t hdrt" style="left:0px;top:373.65px;width:19px;text-align:center;color:#222">28</div>
<div class="a" style="left:0px;top:399px;width:19px;height:1px;background:#c6c6c6"></div>
<div class="t hdrt" style="left:0px;top:387.65px;width:19px;text-align:center;color:#222">29</div>
<div class="a" style="left:0px;top:411px;width:19px;height:1px;background:#c6c6c6"></div>
<div class="t hdrt" style="left:0px;top:399.65px;width:19px;text-align:center;color:#222">30</div>
<div class="a" style="left:0px;top:425px;width:19px;height:1px;background:#c6c6c6"></div>
<div class="t hdrt" style="left:0px;top:413.65px;width:19px;text-align:center;color:#222">31</div>
<div class="a" style="left:0px;top:439px;width:19px;height:1px;background:#c6c6c6"></div>
<div class="t hdrt" style="left:0px;top:427.65px;width:19px;text-align:center;color:#222">32</div>
<div class="a" style="left:0px;top:453px;width:19px;height:1px;background:#c6c6c6"></div>
<div class="t hdrt" style="left:0px;top:441.65px;width:19px;text-align:center;color:#222">33</div>
<div class="a" style="left:0px;top:467px;width:19px;height:1px;background:#c6c6c6"></div>
<div class="t hdrt" style="left:0px;top:455.65px;width:19px;text-align:center;color:#222">34</div>
<div class="a" style="left:0px;top:481px;width:19px;height:1px;background:#c6c6c6"></div>
<div class="t hdrt" style="left:0px;top:469.65px;width:19px;text-align:center;color:#222">35</div>
<div class="a" style="left:0px;top:495px;width:19px;height:1px;background:#c6c6c6"></div>
<div class="t hdrt" style="left:0px;top:483.65px;width:19px;text-align:center;color:#222">36</div>
<div class="a" style="left:0px;top:509px;width:19px;height:1px;background:#c6c6c6"></div>
<div class="t hdrt" style="left:0px;top:497.65px;width:19px;text-align:center;color:#222">37</div>
<div class="a" style="left:19px;top:0px;width:1px;height:500px;background:#ababab"></div>
</div>
<div class="a" style="left:21px;top:217px;width:997px;height:500px;background:#99ccff;overflow:hidden">
<div class="a" style="left:0px;top:0px;width:649px;height:116px;background:linear-gradient(90deg,#8383bf 0px,#a6a6d3 45px,#dcdcef 110px,#f6f6fb 150px,#ffffff 180px,#ffffff 270px,#fcfdff 279px,#ebf4ff 379px,#d6eaff 479px,#bcdcff 579px,#a6d2ff 629px,#9dceff 645px,#99ccff 649px)"></div>
<svg class="a" style="left:0;top:0" width="240" height="117" font-family="Liberation Serif" font-weight="normal" stroke="#111" stroke-width="0.5"><text x="4.600000000000001" y="15" font-size="9" textLength="14.399999999999999" lengthAdjust="spacingAndGlyphs" fill="#111">AN</text><text x="24.6" y="15" font-size="15" textLength="107.4" lengthAdjust="spacingAndGlyphs" fill="#111">UNCOMMON</text><text x="148" y="15" font-size="15" textLength="35" lengthAdjust="spacingAndGlyphs" fill="#111">WAY</text><text x="34.7" y="38" font-size="9" textLength="13.299999999999997" lengthAdjust="spacingAndGlyphs" fill="#111">TO</text><text x="54.400000000000006" y="38" font-size="21" textLength="100.6" lengthAdjust="spacingAndGlyphs" fill="#111">WEALTH</text><text x="50.3" y="64" font-size="12" textLength="91.3" lengthAdjust="spacingAndGlyphs" fill="#111">CLICK HERE</text><text x="24.6" y="78" font-size="12" textLength="143.4" lengthAdjust="spacingAndGlyphs" fill="#111">FOR MORE USEFUL</text><text x="20" y="92" font-size="12" textLength="152" lengthAdjust="spacingAndGlyphs" fill="#111">PERSONAL FINANCE</text><text x="36.6" y="106" font-size="12" textLength="118.4" lengthAdjust="spacingAndGlyphs" fill="#111">SPREADSHEETS</text><text x="16" y="38" font-size="22" textLength="14.299999999999997" lengthAdjust="spacingAndGlyphs" fill="#22bb22" stroke="#119911" stroke-width="0.3" font-weight="bold">$</text><text x="159" y="38" font-size="22" textLength="14.599999999999994" lengthAdjust="spacingAndGlyphs" fill="#22bb22" stroke="#119911" stroke-width="0.3" font-weight="bold">$</text><text x="13" y="109" font-size="22" textLength="15" lengthAdjust="spacingAndGlyphs" fill="#22bb22" stroke="#119911" stroke-width="0.3" font-weight="bold">$</text><text x="165.7" y="110" font-size="22" textLength="13.700000000000017" lengthAdjust="spacingAndGlyphs" fill="#22bb22" stroke="#119911" stroke-width="0.3" font-weight="bold">$</text></svg>
<div class="t" style="left:235px;top:2px;font-size:9.2px;line-height:11px;font-weight:bold;color:#000">Car Maintenance Scheduler</div>
<div class="t" style="left:235px;top:23px;font-size:9.2px;line-height:11px;color:#000;-webkit-text-stroke:0.2px #000"><u>Instructions for use</u>:</div>
<div class="t" style="left:235px;top:33px;font-size:9.2px;line-height:11px;color:#000;-webkit-text-stroke:0.2px #000">1) For each car maintenance item, enter in the white cells the date that you last performed that item.</div>
<div class="t" style="left:235px;top:54px;font-size:9.2px;line-height:11px;color:#000;-webkit-text-stroke:0.2px #000">2) The date when each maintenance item should be performed next will appear in the gold cells.&nbsp; If the</div>
<div class="t" style="left:235px;top:65px;font-size:9.2px;line-height:11px;color:#000;-webkit-text-stroke:0.2px #000">cell turns red, that means that maintenance item is past due.</div>
<div class="t" style="left:235px;top:86px;font-size:9.2px;line-height:11px;color:#000;-webkit-text-stroke:0.2px #000">3) Each time you perform a maintenance item, record the new date in the appropriate white cell.</div>
<div class="t" style="left:2px;top:129px;font-size:13px;line-height:16px;font-weight:bold;letter-spacing:0.25px;color:#000"><u>Service Schedule</u></div>
<div class="a" style="left:259px;top:146px;width:264px;height:32px;background:#ffff99"></div>
<div class="a" style="left:0px;top:163px;width:257px;height:15px;background:#ffff99"></div>
<div class="a" style="left:257px;top:144px;width:266px;height:2px;background:#000"></div>
<div class="a" style="left:0px;top:161px;width:259px;height:2px;background:#000"></div>
<div class="a" style="left:0px;top:178px;width:523px;height:2px;background:#000"></div>
<div class="a" style="left:257px;top:144px;width:2px;height:36px;background:#000"></div>
<div class="a" style="left:390px;top:145px;width:1px;height:35px;background:#000"></div>
<div class="a" style="left:521px;top:144px;width:2px;height:36px;background:#000"></div>
<div class="t" style="left:259px;top:146px;width:131px;text-align:center;font-size:12.9px;line-height:17px;font-weight:bold;color:#000">Last done on</div>
<div class="t" style="left:259px;top:163px;width:131px;text-align:center;font-size:12.9px;line-height:17px;font-weight:bold;color:#000">this date:</div>
<div class="t" style="left:391px;top:146px;width:131px;text-align:center;font-size:12.9px;line-height:17px;font-weight:bold;color:#000">Date this should</div>
<div class="t" style="left:391px;top:163px;width:131px;text-align:center;font-size:12.9px;line-height:17px;font-weight:bold;color:#000">next be done:</div>
<div class="t" style="left:2px;top:164px;font-size:9.3px;line-height:17px;font-weight:bold;letter-spacing:0.55px;color:#000;height:15px;overflow:hidden">Every week or at gas fill-up</div>
<div class="a" style="left:259px;top:180px;width:131px;height:13px;background:#fff"></div>
<div class="a" style="left:391px;top:180px;width:130px;height:13px;background:#ff0000"></div>
<div class="a" style="left:257px;top:179px;width:2px;height:15px;background:#000"></div>
<div class="a" style="left:390px;top:179px;width:1px;height:15px;background:#000"></div>
<div class="a" style="left:521px;top:179px;width:2px;height:15px;background:#000"></div>
<div class="a" style="left:259px;top:193px;width:264px;height:1px;background:#000"></div>
<div class="t" style="left:2px;top:181px;font-size:9.25px;line-height:14px;color:#000;-webkit-text-stroke:0.25px #000;height:12px;overflow:hidden">Check fluid levels</div>
<div class="t" style="left:259px;top:180px;width:131px;text-align:center;font-size:10.7px;line-height:15px;color:#000">15-02-2016</div>
<div class="t" style="left:391px;top:180px;width:131px;text-align:center;font-size:10.7px;line-height:15px;font-weight:bold;color:#fff">22-02-2016</div>
<div class="a" style="left:259px;top:194px;width:131px;height:13px;background:#fff"></div>
<div class="a" style="left:391px;top:194px;width:130px;height:13px;background:#ff0000"></div>
<div class="a" style="left:257px;top:193px;width:2px;height:15px;background:#000"></div>
<div class="a" style="left:390px;top:193px;width:1px;height:15px;background:#000"></div>
<div class="a" style="left:521px;top:193px;width:2px;height:15px;background:#000"></div>
<div class="a" style="left:259px;top:207px;width:264px;height:1px;background:#000"></div>
<div class="t" style="left:2px;top:195px;font-size:9.25px;line-height:14px;color:#000;-webkit-text-stroke:0.25px #000;height:12px;overflow:hidden"><span style="padding-left:16px"></span>Oil</div>
<div class="t" style="left:259px;top:194px;width:131px;text-align:center;font-size:10.7px;line-height:15px;color:#000">12-01-2016</div>
<div class="t" style="left:391px;top:194px;width:131px;text-align:center;font-size:10.7px;line-height:15px;font-weight:bold;color:#fff">19-01-2016</div>
<div class="a" style="left:259px;top:208px;width:131px;height:13px;background:#fff"></div>
<div class="a" style="left:391px;top:208px;width:130px;height:13px;background:#ff0000"></div>
<div class="a" style="left:257px;top:207px;width:2px;height:15px;background:#000"></div>
<div class="a" style="left:390px;top:207px;width:1px;height:15px;background:#000"></div>
<div class="a" style="left:521px;top:207px;width:2px;height:15px;background:#000"></div>
<div class="a" style="left:259px;top:221px;width:264px;height:1px;background:#000"></div>
<div class="t" style="left:2px;top:209px;font-size:9.25px;line-height:14px;color:#000;-webkit-text-stroke:0.25px #000;height:12px;overflow:hidden"><span style="padding-left:16px"></span>Coolant</div>
<div class="t" style="left:259px;top:208px;width:131px;text-align:center;font-size:10.7px;line-height:15px;color:#000">13-01-2016</div>
<div class="t" style="left:391px;top:208px;width:131px;text-align:center;font-size:10.7px;line-height:15px;font-weight:bold;color:#fff">20-01-2016</div>
<div class="a" style="left:259px;top:222px;width:131px;height:13px;background:#fff"></div>
<div class="a" style="left:391px;top:222px;width:130px;height:13px;background:#ff0000"></div>
<div class="a" style="left:257px;top:221px;width:2px;height:15px;background:#000"></div>
<div class="a" style="left:390px;top:221px;width:1px;height:15px;background:#000"></div>
<div class="a" style="left:521px;top:221px;width:2px;height:15px;background:#000"></div>
<div class="a" style="left:259px;top:235px;width:264px;height:1px;background:#000"></div>
<div class="t" style="left:2px;top:223px;font-size:9.25px;line-height:14px;color:#000;-webkit-text-stroke:0.25px #000;height:12px;overflow:hidden"><span style="padding-left:16px"></span>Wiper fluid</div>
<div class="t" style="left:259px;top:222px;width:131px;text-align:center;font-size:10.7px;line-height:15px;color:#000">14-01-2016</div>
<div class="t" style="left:391px;top:222px;width:131px;text-align:center;font-size:10.7px;line-height:15px;font-weight:bold;color:#fff">21-01-2016</div>
<div class="a" style="left:259px;top:236px;width:131px;height:13px;background:#fff"></div>
<div class="a" style="left:391px;top:236px;width:130px;height:13px;background:#ff0000"></div>
<div class="a" style="left:257px;top:235px;width:2px;height:15px;background:#000"></div>
<div class="a" style="left:390px;top:235px;width:1px;height:15px;background:#000"></div>
<div class="a" style="left:521px;top:235px;width:2px;height:15px;background:#000"></div>
<div class="a" style="left:259px;top:249px;width:264px;height:1px;background:#000"></div>
<div class="t" style="left:2px;top:237px;font-size:9.25px;line-height:14px;color:#000;-webkit-text-stroke:0.25px #000;height:12px;overflow:hidden"><span style="padding-left:16px"></span>Power steering fluid</div>
<div class="t" style="left:259px;top:236px;width:131px;text-align:center;font-size:10.7px;line-height:15px;color:#000">15-01-2016</div>
<div class="t" style="left:391px;top:236px;width:131px;text-align:center;font-size:10.7px;line-height:15px;font-weight:bold;color:#fff">22-01-2016</div>
<div class="a" style="left:259px;top:250px;width:131px;height:13px;background:#fff"></div>
<div class="a" style="left:391px;top:250px;width:130px;height:13px;background:#ff0000"></div>
<div class="a" style="left:257px;top:249px;width:2px;height:15px;background:#000"></div>
<div class="a" style="left:390px;top:249px;width:1px;height:15px;background:#000"></div>
<div class="a" style="left:521px;top:249px;width:2px;height:15px;background:#000"></div>
<div class="a" style="left:0px;top:262px;width:523px;height:2px;background:#000"></div>
<div class="t" style="left:2px;top:251px;font-size:9.25px;line-height:14px;color:#000;-webkit-text-stroke:0.25px #000;height:12px;overflow:hidden">Check tire condition and pressure</div>
<div class="t" style="left:259px;top:250px;width:131px;text-align:center;font-size:10.7px;line-height:15px;color:#000">16-01-2016</div>
<div class="t" style="left:391px;top:250px;width:131px;text-align:center;font-size:10.7px;line-height:15px;font-weight:bold;color:#fff">23-01-2016</div>
<div class="a" style="left:0px;top:264px;width:523px;height:10px;background:#ffff99"></div>
<div class="a" style="left:0px;top:274px;width:523px;height:2px;background:#000"></div>
<div class="a" style="left:521px;top:263px;width:2px;height:13px;background:#000"></div>
<div class="t" style="left:2px;top:263px;font-size:9.3px;line-height:14px;font-weight:bold;letter-spacing:0.6px;color:#000;height:11px;overflow:hidden">Every 3,000 miles or 3 months</div>
<div class="a" style="left:259px;top:276px;width:131px;height:13px;background:#fff"></div>
<div class="a" style="left:391px;top:276px;width:130px;height:13px;background:#ffcc00"></div>
<div class="a" style="left:257px;top:275px;width:2px;height:15px;background:#000"></div>
<div class="a" style="left:390px;top:275px;width:1px;height:15px;background:#000"></div>
<div class="a" style="left:521px;top:275px;width:2px;height:15px;background:#000"></div>
<div class="a" style="left:259px;top:289px;width:264px;height:1px;background:#000"></div>
<div class="t" style="left:2px;top:277px;font-size:9.25px;line-height:14px;color:#000;-webkit-text-stroke:0.25px #000;height:12px;overflow:hidden">Change engine oil and filter</div>
<div class="a" style="left:259px;top:290px;width:131px;height:13px;background:#fff"></div>
<div class="a" style="left:391px;top:290px;width:130px;height:13px;background:#ffcc00"></div>
<div class="a" style="left:257px;top:289px;width:2px;height:15px;background:#000"></div>
<div class="a" style="left:390px;top:289px;width:1px;height:15px;background:#000"></div>
<div class="a" style="left:521px;top:289px;width:2px;height:15px;background:#000"></div>
<div class="a" style="left:259px;top:303px;width:264px;height:1px;background:#000"></div>
<div class="t" style="left:2px;top:291px;font-size:9.25px;line-height:14px;color:#000;-webkit-text-stroke:0.25px #000;height:12px;overflow:hidden">Check hoses for leaks or bulges</div>
<div class="a" style="left:259px;top:304px;width:131px;height:13px;background:#fff"></div>
<div class="a" style="left:391px;top:304px;width:130px;height:13px;background:#ffcc00"></div>
<div class="a" style="left:257px;top:303px;width:2px;height:15px;background:#000"></div>
<div class="a" style="left:390px;top:303px;width:1px;height:15px;background:#000"></div>
<div class="a" style="left:521px;top:303px;width:2px;height:15px;background:#000"></div>
<div class="a" style="left:259px;top:317px;width:264px;height:1px;background:#000"></div>
<div class="t" style="left:2px;top:305px;font-size:9.25px;line-height:14px;color:#000;-webkit-text-stroke:0.25px #000;height:12px;overflow:hidden">Check wiper blades</div>
<div class="a" style="left:259px;top:318px;width:131px;height:13px;background:#fff"></div>
<div class="a" style="left:391px;top:318px;width:130px;height:13px;background:#ffcc00"></div>
<div class="a" style="left:257px;top:317px;width:2px;height:15px;background:#000"></div>
<div class="a" style="left:390px;top:317px;width:1px;height:15px;background:#000"></div>
<div class="a" style="left:521px;top:317px;width:2px;height:15px;background:#000"></div>
<div class="a" style="left:259px;top:331px;width:264px;height:1px;background:#000"></div>
<div class="t" style="left:2px;top:319px;font-size:9.25px;line-height:14px;color:#000;-webkit-text-stroke:0.25px #000;height:12px;overflow:hidden">Check tread depth on all tires</div>
<div class="a" style="left:259px;top:332px;width:131px;height:13px;background:#fff"></div>
<div class="a" style="left:391px;top:332px;width:130px;height:13px;background:#ffcc00"></div>
<div class="a" style="left:257px;top:331px;width:2px;height:15px;background:#000"></div>
<div class="a" style="left:390px;top:331px;width:1px;height:15px;background:#000"></div>
<div class="a" style="left:521px;top:331px;width:2px;height:15px;background:#000"></div>
<div class="a" style="left:0px;top:344px;width:523px;height:2px;background:#000"></div>
<div class="t" style="left:2px;top:333px;font-size:9.25px;line-height:14px;color:#000;-webkit-text-stroke:0.25px #000;height:12px;overflow:hidden">Check battery terminals and cables for corrosion</div>
<div class="a" style="left:0px;top:346px;width:523px;height:10px;background:#ffff99"></div>
<div class="a" style="left:0px;top:356px;width:523px;height:2px;background:#000"></div>
<div class="a" style="left:521px;top:345px;width:2px;height:13px;background:#000"></div>
<div class="t" style="left:2px;top:345px;font-size:9.3px;line-height:14px;font-weight:bold;letter-spacing:0.6px;color:#000;height:11px;overflow:hidden">Every 7,500 miles or 6 months</div>
<div class="a" style="left:259px;top:358px;width:131px;height:13px;background:#fff"></div>
<div class="a" style="left:391px;top:358px;width:130px;height:13px;background:#ffcc00"></div>
<div class="a" style="left:257px;top:357px;width:2px;height:15px;background:#000"></div>
<div class="a" style="left:390px;top:357px;width:1px;height:15px;background:#000"></div>
<div class="a" style="left:521px;top:357px;width:2px;height:15px;background:#000"></div>
<div class="a" style="left:259px;top:371px;width:264px;height:1px;background:#000"></div>
<div class="t" style="left:2px;top:359px;font-size:9.25px;line-height:14px;color:#000;-webkit-text-stroke:0.25px #000;height:12px;overflow:hidden">Service battery</div>
<div class="a" style="left:259px;top:372px;width:131px;height:13px;background:#fff"></div>
<div class="a" style="left:391px;top:372px;width:130px;height:13px;background:#ffcc00"></div>
<div class="a" style="left:257px;top:371px;width:2px;height:15px;background:#000"></div>
<div class="a" style="left:390px;top:371px;width:1px;height:15px;background:#000"></div>
<div class="a" style="left:521px;top:371px;width:2px;height:15px;background:#000"></div>
<div class="a" style="left:259px;top:385px;width:264px;height:1px;background:#000"></div>
<div class="t" style="left:2px;top:373px;font-size:9.25px;line-height:14px;color:#000;-webkit-text-stroke:0.25px #000;height:12px;overflow:hidden">Rotate and balance tires</div>
<div class="a" style="left:259px;top:386px;width:131px;height:13px;background:#fff"></div>
<div class="a" style="left:391px;top:386px;width:130px;height:13px;background:#ffcc00"></div>
<div class="a" style="left:257px;top:385px;width:2px;height:15px;background:#000"></div>
<div class="a" style="left:390px;top:385px;width:1px;height:15px;background:#000"></div>
<div class="a" style="left:521px;top:385px;width:2px;height:15px;background:#000"></div>
<div class="a" style="left:0px;top:398px;width:523px;height:2px;background:#000"></div>
<div class="t" style="left:2px;top:387px;font-size:9.25px;line-height:14px;color:#000;-webkit-text-stroke:0.25px #000;height:12px;overflow:hidden">Check brake pad wear</div>
<div class="a" style="left:0px;top:400px;width:523px;height:10px;background:#ffff99"></div>
<div class="a" style="left:0px;top:410px;width:523px;height:2px;background:#000"></div>
<div class="a" style="left:521px;top:399px;width:2px;height:13px;background:#000"></div>
<div class="t" style="left:2px;top:399px;font-size:9.3px;line-height:14px;font-weight:bold;letter-spacing:0.6px;color:#000;height:11px;overflow:hidden">Every 15,000 miles or 1 year</div>
<div class="a" style="left:259px;top:412px;width:131px;height:13px;background:#fff"></div>
<div class="a" style="left:391px;top:412px;width:130px;height:13px;background:#ffcc00"></div>
<div class="a" style="left:257px;top:411px;width:2px;height:15px;background:#000"></div>
<div class="a" style="left:390px;top:411px;width:1px;height:15px;background:#000"></div>
<div class="a" style="left:521px;top:411px;width:2px;height:15px;background:#000"></div>
<div class="a" style="left:259px;top:425px;width:264px;height:1px;background:#000"></div>
<div class="t" style="left:2px;top:413px;font-size:9.25px;line-height:14px;color:#000;-webkit-text-stroke:0.25px #000;height:12px;overflow:hidden">Flush and fill transmission fluid and change transmission filter</div>
<div class="a" style="left:259px;top:426px;width:131px;height:13px;background:#fff"></div>
<div class="a" style="left:391px;top:426px;width:130px;height:13px;background:#ffcc00"></div>
<div class="a" style="left:257px;top:425px;width:2px;height:15px;background:#000"></div>
<div class="a" style="left:390px;top:425px;width:1px;height:15px;background:#000"></div>
<div class="a" style="left:521px;top:425px;width:2px;height:15px;background:#000"></div>
<div class="a" style="left:259px;top:439px;width:264px;height:1px;background:#000"></div>
<div class="t" style="left:2px;top:427px;font-size:9.25px;line-height:14px;color:#000;-webkit-text-stroke:0.25px #000;height:12px;overflow:hidden">Replace air and fuel filters</div>
<div class="a" style="left:259px;top:440px;width:131px;height:13px;background:#fff"></div>
<div class="a" style="left:391px;top:440px;width:130px;height:13px;background:#ffcc00"></div>
<div class="a" style="left:257px;top:439px;width:2px;height:15px;background:#000"></div>
<div class="a" style="left:390px;top:439px;width:1px;height:15px;background:#000"></div>
<div class="a" style="left:521px;top:439px;width:2px;height:15px;background:#000"></div>
<div class="a" style="left:259px;top:453px;width:264px;height:1px;background:#000"></div>
<div class="t" style="left:2px;top:441px;font-size:9.25px;line-height:14px;color:#000;-webkit-text-stroke:0.25px #000;height:12px;overflow:hidden">Replace PCV and breather element</div>
<div class="a" style="left:259px;top:454px;width:131px;height:13px;background:#fff"></div>
<div class="a" style="left:391px;top:454px;width:130px;height:13px;background:#ffcc00"></div>
<div class="a" style="left:257px;top:453px;width:2px;height:15px;background:#000"></div>
<div class="a" style="left:390px;top:453px;width:1px;height:15px;background:#000"></div>
<div class="a" style="left:521px;top:453px;width:2px;height:15px;background:#000"></div>
<div class="a" style="left:259px;top:467px;width:264px;height:1px;background:#000"></div>
<div class="t" style="left:2px;top:455px;font-size:9.25px;line-height:14px;color:#000;-webkit-text-stroke:0.25px #000;height:12px;overflow:hidden">Replace carbon canister filter</div>
<div class="a" style="left:259px;top:468px;width:131px;height:13px;background:#fff"></div>
<div class="a" style="left:391px;top:468px;width:130px;height:13px;background:#ffcc00"></div>
<div class="a" style="left:257px;top:467px;width:2px;height:15px;background:#000"></div>
<div class="a" style="left:390px;top:467px;width:1px;height:15px;background:#000"></div>
<div class="a" style="left:521px;top:467px;width:2px;height:15px;background:#000"></div>
<div class="a" style="left:259px;top:481px;width:264px;height:1px;background:#000"></div>
<div class="t" style="left:2px;top:469px;font-size:9.25px;line-height:14px;color:#000;-webkit-text-stroke:0.25px #000;height:12px;overflow:hidden">Lubricate doors, locks, hinges, and parking brake</div>
<div class="a" style="left:259px;top:482px;width:131px;height:13px;background:#fff"></div>
<div class="a" style="left:391px;top:482px;width:130px;height:13px;background:#ffcc00"></div>
<div class="a" style="left:257px;top:481px;width:2px;height:15px;background:#000"></div>
<div class="a" style="left:390px;top:481px;width:1px;height:15px;background:#000"></div>
<div class="a" style="left:521px;top:481px;width:2px;height:15px;background:#000"></div>
<div class="a" style="left:259px;top:495px;width:264px;height:1px;background:#000"></div>
<div class="t" style="left:2px;top:483px;font-size:9.25px;line-height:14px;color:#000;-webkit-text-stroke:0.25px #000;height:12px;overflow:hidden">Check alignment</div>
<div class="a" style="left:259px;top:496px;width:131px;height:13px;background:#fff"></div>
<div class="a" style="left:391px;top:496px;width:130px;height:13px;background:#ffcc00"></div>
<div class="a" style="left:257px;top:495px;width:2px;height:15px;background:#000"></div>
<div class="a" style="left:390px;top:495px;width:1px;height:15px;background:#000"></div>
<div class="a" style="left:521px;top:495px;width:2px;height:15px;background:#000"></div>
<div class="a" style="left:259px;top:509px;width:264px;height:1px;background:#000"></div>
<div class="t" style="left:259px;top:276px;width:131px;text-align:center;font-size:10.7px;line-height:15px;color:#000">Softpedia Test<span style="display:inline-block;width:1px;height:11px;background:#000;vertical-align:-2px;margin-left:0px"></span></div>
<div class="a" style="left:257px;top:274px;width:135px;height:17px;border:2px solid #217346;background:transparent"></div>
<div class="a" style="left:388px;top:287px;width:6px;height:6px;background:#217346;border:1px solid #fff"></div>
<div class="t" style="left:308px;top:163px;font-size:21px;line-height:28px;font-weight:bold;letter-spacing:3.2px;color:rgba(255,255,255,0.3);text-shadow:0 0 1px rgba(0,0,0,0.12)">SOFTPEDIA</div>
</div>
<div class="a" style="left:1018px;top:205px;width:21px;height:512px;background:#e6e6e6"></div>
<div class="a" style="left:1017px;top:217px;width:1px;height:500px;background:#ababab"></div>
<div class="a" style="left:1021px;top:207px;width:15px;height:16px;background:#fff;border:1px solid #ababab"></div>
<svg class="a" style="left:1021px;top:207px" width="15" height="16"><path d="M4 9.5 L7.5 5.5 L11 9.5 Z" fill="#6d6d6d"/></svg>
<div class="a" style="left:1021px;top:222px;width:15px;height:360px;background:#fff;border:1px solid #ababab"></div>
<div class="a" style="left:1021px;top:582px;width:15px;height:121px;background:#dadada"></div>
<div class="a" style="left:1021px;top:703px;width:15px;height:15px;background:#fff;border:1px solid #ababab"></div>
<svg class="a" style="left:1021px;top:703px" width="15" height="15"><path d="M4 6 L11 6 L7.5 10 Z" fill="#6d6d6d"/></svg>

<div class="a" style="left:1px;top:717px;width:1038px;height:29px;background:#e6e6e6"></div>
<div class="a" style="left:1px;top:745px;width:1038px;height:1px;background:#d0d0d0"></div>
<svg class="a" style="left:27px;top:727px;" width="6" height="8" viewBox="0 0 6 8"><path d="M5.5 0.5 V7.5 L1 4 Z" fill="#bdbdbd"/></svg>
<svg class="a" style="left:56px;top:727px;" width="6" height="8" viewBox="0 0 6 8"><path d="M0.5 0.5 V7.5 L5 4 Z" fill="#bdbdbd"/></svg>
<div class="a" style="left:101px;top:717px;width:187px;height:25px;background:#fff"></div>
<div class="a" style="left:1px;top:717px;width:100px;height:1px;background:#9a9a9a"></div>
<div class="a" style="left:288px;top:717px;width:730px;height:1px;background:#9a9a9a"></div>
<div class="a" style="left:101px;top:717px;width:1px;height:25px;background:#9a9a9a"></div>
<div class="a" style="left:287px;top:717px;width:1px;height:25px;background:#9a9a9a"></div>
<div class="a" style="left:101px;top:740px;width:187px;height:2px;background:#217346"></div>
<div class="t" style="left:113px;top:722px;font-size:12.7px;line-height:16px;color:#217346;font-weight:bold;">Car Maintenance Schedule</div>
<div class="a" style="left:290px;top:720px;width:56px;height:22px;background:#ffff00"></div>
<div class="t" style="left:300.5px;top:724px;font-size:12.17px;line-height:15px;color:#262626;">Bonus</div>
<div class="a" style="left:348px;top:720px;width:1px;height:22px;background:#bdbdbd"></div>
<svg class="a" style="left:381px;top:722px;" width="18" height="18" viewBox="0 0 18 18"><circle cx="9" cy="9" r="7.6" fill="none" stroke="#6d6d6d" stroke-width="1.3"/><path d="M9 5 V13 M5 9 H13" stroke="#6d6d6d" stroke-width="1.5"/></svg>
<svg class="a" style="left:623px;top:725px;" width="3" height="12" viewBox="0 0 3 12"><circle cx="1.5" cy="1.5" r="1" fill="#aaa"/><circle cx="1.5" cy="5.5" r="1" fill="#aaa"/><circle cx="1.5" cy="9.5" r="1" fill="#aaa"/></svg>
<div class="a" style="left:656px;top:724px;width:348px;height:15px;background:#dadada"></div>
<div class="a" style="left:642px;top:724px;width:15px;height:15px;background:#fff;border:1px solid #ababab"></div>
<svg class="a" style="left:642px;top:724px;" width="15" height="15" viewBox="0 0 15 15"><path d="M9.5 4 V11 L5.5 7.5 Z" fill="#6d6d6d"/></svg>
<div class="a" style="left:656px;top:724px;width:330px;height:15px;background:#fff;border:1px solid #ababab"></div>
<div class="a" style="left:1003px;top:724px;width:15px;height:15px;background:#fff;border:1px solid #ababab"></div>
<svg class="a" style="left:1003px;top:724px;" width="15" height="15" viewBox="0 0 15 15"><path d="M5.5 4 V11 L9.5 7.5 Z" fill="#6d6d6d"/></svg>
<div class="a" style="left:1px;top:746px;width:1038px;height:21px;background:#f3f3f3"></div>
<div class="t" style="left:8.5px;top:749px;font-size:11.09px;line-height:14px;color:#555;">Enter</div>
<svg class="a" style="left:753px;top:748px;" width="15" height="15" viewBox="0 0 15 15"><g fill="none" stroke="#6d6d6d" stroke-width="1"><rect x="0.5" y="0.5" width="13" height="13"/><path d="M0.5 4.8 H13.5 M0.5 9.2 H13.5 M4.8 0.5 V13.5 M9.2 0.5 V13.5"/></g></svg>
<svg class="a" style="left:792px;top:748px;" width="15" height="15" viewBox="0 0 15 15"><g fill="none" stroke="#6d6d6d" stroke-width="1"><rect x="0.5" y="0.5" width="13" height="13"/><rect x="3.5" y="3.5" width="7" height="7"/><path d="M5 5.5 H9 M5 7.5 H9"/></g></svg>
<svg class="a" style="left:829px;top:748px;" width="15" height="15" viewBox="0 0 15 15"><g fill="none" stroke="#6d6d6d" stroke-width="1"><path d="M0.5 13.5 V0.5 H13.5 V13.5 Z M5.5 0.5 V8.5 H13.5 M9.5 0.5 V8.5"/></g></svg>
<div class="a" style="left:860px;top:755px;width:7px;height:2px;background:#9a9a9a"></div>
<div class="a" style="left:871px;top:755px;width:100px;height:1px;background:#b5b5b5"></div>
<div class="a" style="left:921px;top:752px;width:1px;height:8px;background:#9a9a9a"></div>
<div class="a" style="left:975px;top:755px;width:8px;height:2px;background:#9a9a9a"></div>
<div class="a" style="left:978px;top:752px;width:2px;height:8px;background:#9a9a9a"></div>
<div class="t" style="left:997.7px;top:750px;font-size:10.49px;line-height:13px;color:#9a9a9a;">69%</div>
<div class="a" style="left:0;top:0;width:1px;height:768px;background:#217346"></div>
<div class="a" style="left:1039px;top:0;width:1px;height:768px;background:#217346"></div>
<div class="a" style="left:0;top:767px;width:1040px;height:1px;background:#217346"></div>
</body></html>
